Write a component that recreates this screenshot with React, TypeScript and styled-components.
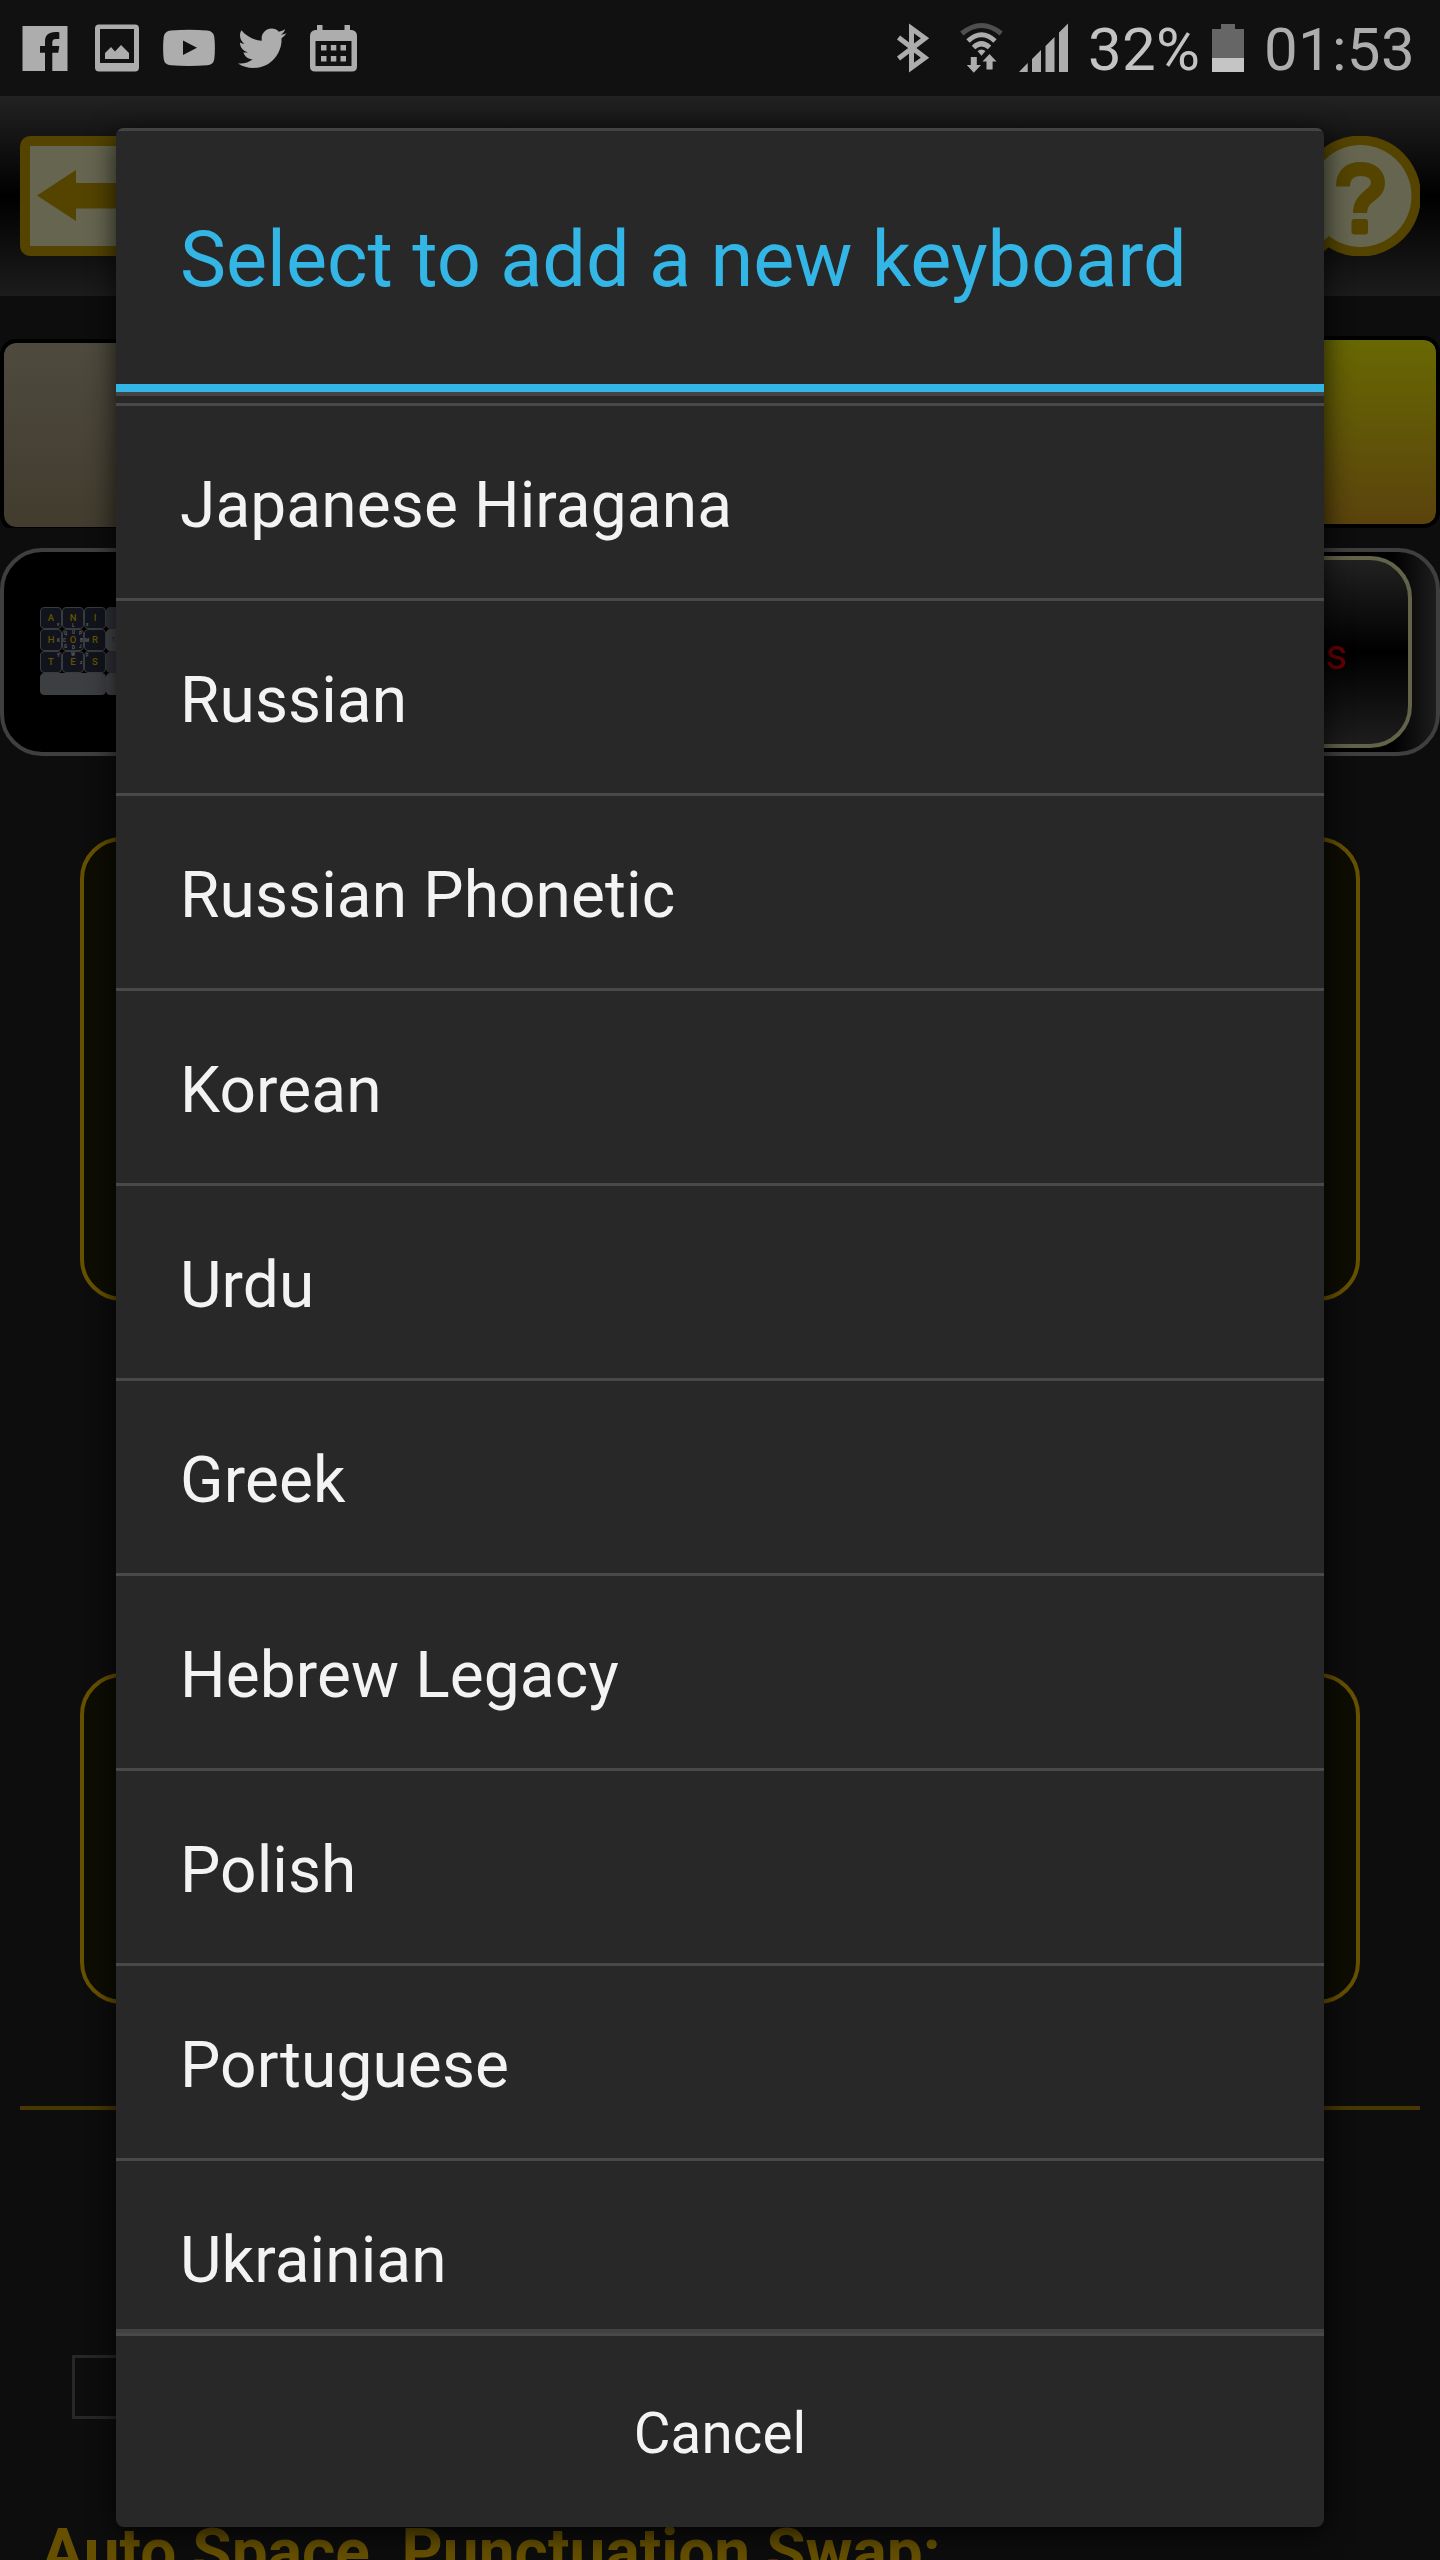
import React from 'react';
import styled, { createGlobalStyle } from 'styled-components';
import { FaTwitter } from 'react-icons/fa';

const GlobalStyle = createGlobalStyle`
  * { box-sizing: border-box; }
  html, body { margin: 0; padding: 0; background: #0d0d0d; }
`;

const Screen = styled.div`
  position: relative;
  width: 1440px;
  height: 2560px;
  overflow: hidden;
  display: flex;
  flex-direction: column;
  background: #0d0d0d;
  font-family: Roboto, 'Noto Sans', sans-serif;
`;

/* ---------- status bar ---------- */

const StatusBar = styled.header`
  flex: none;
  height: 96px;
  display: flex;
  justify-content: space-between;
  padding: 0 28px 0 22px;
  background: #111;
  color: #adadad;
`;

const StatusGroup = styled.div`
  display: flex;
  height: 96px;
`;

const StatusIcon = styled.svg<{ $gap?: number }>`
  display: block;
  flex: none;
  height: 96px;
  margin-left: ${(p) => p.$gap ?? 0}px;
  fill: #adadad;
`;

const BirdSlot = styled.div`
  margin: 23.5px 0 0 23px;
  width: 48.5px;
  font-size: 48.5px;
  line-height: 0;
`;

const StatusText = styled.span<{ $w: number; $gap: number; $tone: string }>`
  width: ${(p) => p.$w}px;
  margin-left: ${(p) => p.$gap}px;
  padding-top: 14px;
  font-size: 60px;
  line-height: 72px;
  letter-spacing: 0.3px;
  white-space: nowrap;
  color: ${(p) => p.$tone};
`;

/* ---------- dimmed page ---------- */

const TitleBar = styled.div`
  flex: none;
  height: 200px;
  padding: 40px 20px;
  display: flex;
  justify-content: space-between;
  background: linear-gradient(#222, #000 50%, #1c1c1c);
`;

const BarIcon = styled.svg`
  display: block;
  width: 120px;
  height: 120px;
`;

const ButtonRow = styled.div`
  flex: none;
  height: 192px;
  margin-top: 40px;
  display: flex;
  justify-content: space-between;
  overflow: hidden;
`;

const GradientButton = styled.div<{ $from: string; $to: string; $drop?: number }>`
  width: 720px;
  height: 192px;
  margin-top: ${(p) => p.$drop ?? 0}px;
  border: 4px solid #000;
  border-radius: 16px;
  background: linear-gradient(${(p) => p.$from}, ${(p) => p.$to}) padding-box;
`;

const KeyboardPanel = styled.section`
  flex: none;
  height: 208px;
  margin-top: 20px;
  padding: 4px 24px 4px 36px;
  display: flex;
  justify-content: space-between;
  border: 4px solid #3f3f3f;
  border-radius: 42px;
  background: linear-gradient(90deg, #000 0 1388px, #1d1d1d 1432px);
`;

const ChangeButton = styled.div`
  width: 480px;
  height: 192px;
  padding: 4px 61px 0 0;
  display: flex;
  align-items: center;
  justify-content: flex-end;
  border: 4px solid #63634a;
  border-radius: 42px;
  background: linear-gradient(#212121, #000 50%, #1d1d1d);
  color: #660000;
  font-size: 42px;
  font-weight: 400;
`;

const MiniKeyboard = styled.div`
  margin-top: 51px;
  width: 132px;
  height: 88px;
  display: grid;
  grid-template-columns: repeat(6, 22px);
  grid-template-rows: repeat(4, 22px);
  border-radius: 3px;
`;

const MiniKey = styled.div<{ $tone?: string; $span?: number }>`
  position: relative;
  grid-column: span ${(p) => p.$span ?? 1};
  border: 1px solid ${(p) => p.$tone ?? '#3a3b40'};
  border-radius: 4px;
  background: ${(p) => p.$tone ?? '#11141c'};
  color: ${(p) => (p.$tone ? '#222' : '#665200')};
  padding-left: ${(p) => (p.$tone ? 4 : 0)}px;
  font-size: ${(p) => (p.$tone ? 8 : 9.5)}px;
  font-weight: ${(p) => (p.$tone ? 400 : 500)};
  line-height: 20px;
  text-align: ${(p) => (p.$tone ? 'left' : 'center')};
`;

const Hint = styled.span<{ $x: number; $y: number }>`
  position: absolute;
  left: ${(p) => p.$x}px;
  top: ${(p) => p.$y}px;
  color: #606166;
  font-size: 4.5px;
  line-height: 5px;
  font-weight: 700;
`;

const Card = styled.section<{ $h: number; $gap: number }>`
  flex: none;
  height: ${(p) => p.$h}px;
  margin: ${(p) => p.$gap}px 80px 0;
  border: 4px solid #665000;
  border-radius: 42px;
  background: #0d0d04;
`;

const Separator = styled.div`
  flex: none;
  height: 4px;
  margin: 102px 20px 0;
  background: #463800;
`;

const Field = styled.div`
  flex: none;
  width: 600px;
  height: 64px;
  margin: 245px 0 0 72px;
  border: 3px solid #272727;
`;

const SectionLabel = styled.h2`
  flex: none;
  margin: 96px 0 0 41px;
  font-size: 64px;
  line-height: 75px;
  font-weight: 700;
  white-space: nowrap;
  color: #665000;
`;

/* ---------- dialog ---------- */

const Dialog = styled.div`
  position: absolute;
  left: 116px;
  top: 128px;
  width: 1208px;
  height: 2399px;
  display: flex;
  flex-direction: column;
  border-radius: 8px;
  overflow: hidden;
  background: #282828;
`;

const DialogShadow = styled.div`
  position: absolute;
  left: 116px;
  top: 128px;
  width: 1208px;
  height: 2399px;
  border-radius: 8px;
  box-shadow: 0 6px 28px rgba(0, 0, 0, 0.75);
`;

const DialogTitle = styled.h1`
  flex: none;
  height: 264px;
  margin: 0;
  padding: 4px 64px 0;
  border-top: 3px solid #434343;
  border-bottom: 8px solid #33b5e5;
  font-size: 77.5px;
  line-height: 250px;
  font-weight: 400;
  white-space: nowrap;
  color: #33b5e5;
`;

const List = styled.ul`
  flex: none;
  height: 1941px;
  margin: 0;
  padding: 7px 0 0;
  list-style: none;
  overflow: hidden;
  border-top: 4px solid #444;
  border-bottom: 4px solid #424242;
`;

const Item = styled.li`
  height: 195px;
  padding: 0 64px;
  border-top: 3px solid #494949;
  font-size: 64px;
  line-height: 200px;
  letter-spacing: 0.1px;
  color: #f3f3f3;
`;

const CancelButton = styled.div`
  flex: 1;
  border-top: 3px solid #494949;
  text-align: center;
  font-size: 56.5px;
  line-height: 197px;
  letter-spacing: 0.1px;
  color: #f3f3f3;
`;

const languages = [
  'Japanese Hiragana',
  'Russian',
  'Russian Phonetic',
  'Korean',
  'Urdu',
  'Greek',
  'Hebrew Legacy',
  'Polish',
  'Portuguese',
  'Ukrainian',
];

type HintSpec = [string, number, number];
const keyRows: { letter: string; hints: HintSpec[] }[][] = [
  [
    { letter: 'A', hints: [['v', 16, 14]] },
    { letter: 'N', hints: [['L', 9, 15]] },
    { letter: 'I', hints: [['x', 1, 14]] },
  ],
  [
    { letter: 'H', hints: [['K', 16, 8]] },
    { letter: 'O', hints: [['Q', 1, 1], ['U', 9, 0], ['P', 16, 1], ['C', 0, 8], ['B', 17, 8], ['G', 1, 14], ['D', 9, 15], ['J', 16, 14]] },
    { letter: 'R', hints: [['M', 0, 8]] },
  ],
  [
    { letter: 'T', hints: [['Y', 16, 1]] },
    { letter: 'E', hints: [['W', 8, 0], ['z', 17, 8]] },
    { letter: 'S', hints: [['F', 1, 1]] },
  ],
];
const sideKeys = [
  { tone: '#303136', label: '' },
  { tone: '#434448', label: '12' },
  { tone: '#303136', label: '' },
];

export default function App() {
  return (
    <>
      <GlobalStyle />
      <Screen>
        <StatusBar>
          <StatusGroup>
            <StatusIcon width="46" viewBox="22 0 46 96">
              <path d="M22.5 26H67.5V71H52.3V52.7H58.3L59.3 46H52.3V42.5C52.3 40 53.5 39 56 39H59.3V32.3C49.5 31 45 34.500 45 41.500V46H40V52.700H45V71H22.500Z" />
            </StatusIcon>
            <StatusIcon $gap={27} width="44" viewBox="95 0 44 96">
              <path
                fillRule="evenodd"
                d="M99 24.500H135Q139 24.500 139 28.500V67.500Q139 71.500 135 71.500H99Q95 71.500 95 67.500V28.500Q95 24.500 99 24.500ZM100 29V63H134V29Z"
              />
              <path d="M105 53L111 47L115 51.500L121 45L129 53V59H105Z" />
            </StatusIcon>
            <StatusIcon $gap={24} width="52" viewBox="163 0 52 96">
              <path
                fillRule="evenodd"
                d="M171 30.500Q189 29 207 30.500Q213.500 31 214.300 37Q215.500 48 214.300 59Q213.500 65 207 65.300Q189 66.500 171 65.300Q164.500 65 163.700 59Q162.500 48 163.700 37Q164.500 31 171 30.500ZM183 40.500V55L197 47.700Z"
              />
            </StatusIcon>
            <BirdSlot>
              <FaTwitter />
            </BirdSlot>
            <StatusIcon $gap={23} width="47" viewBox="309.500 0 47 96">
              <path
                fillRule="evenodd"
                d="M316.500 25H322V30H344V25H349.500V30H351.500Q356.500 31 356.500 36V66.500Q356.500 71.500 351.500 71.500H314.500Q309.500 71.500 309.500 66.500V36Q309.500 31 314.500 30H316.500ZM315 41V66H351V41Z"
              />
              <path d="M320.500 45h5.500v5.500h-5.500zM330.300 45h5.500v5.500h-5.500zM340 45h5.500v5.500h-5.500zM320.500 56h5.500v5.500h-5.500zM330.300 56h5.500v5.500h-5.500zM340 56h5.500v5.500h-5.500z" />
            </StatusIcon>
          </StatusGroup>

          <StatusGroup>
            <StatusIcon width="34" viewBox="896 0 34 96">
              <path
                d="M898.500 37.500L925 57.700L911.500 67.500V28.500L925 38.300L898.500 58.500"
                fill="none"
                stroke="#adadad"
                strokeWidth="5"
              />
            </StatusIcon>
            <StatusIcon $gap={29} width="45" viewBox="959 0 45 96">
              <g fill="none" stroke="#adadad" strokeWidth="5">
                <path d="M961.800 33.500Q981.500 17.500 1001.200 33.500" stroke="#4f4f4f" />
                <path d="M968 41Q981.500 28.500 995 41" />
                <path d="M973.500 47.500Q981.500 40 989.500 47.500" />
              </g>
              <path d="M977.500 51Q981.500 48 985.500 51L981.500 55.800Z" />
              <path d="M970.800 57H976.800V65H981L973.800 72.700L966.800 65H970.800Z" />
              <path d="M986.500 69.500H992.600V61.500H996.500L989.500 54L982.500 61.500H986.500Z" />
            </StatusIcon>
            <StatusIcon $gap={15} width="49" viewBox="1019 0 49 96">
              <path d="M1019 72L1027.700 63V72ZM1032 72V59L1041 50V72ZM1045.500 72V46L1054.500 37V72ZM1059 72V32.500L1068 23.500V72Z" />
            </StatusIcon>
            <StatusText $gap={20} $w={112} $tone="#c3c3c3">32%</StatusText>
            <StatusIcon $gap={12} width="32" viewBox="1212 0 32 96">
              <path fill="#666" d="M1212 29H1221V24H1235V29H1244V58H1212Z" />
              <path fill="#c5c5c5" d="M1212 58H1244V72H1212Z" />
            </StatusIcon>
            <StatusText $gap={20} $w={148} $tone="#adadad">01:53</StatusText>
          </StatusGroup>
        </StatusBar>

        <TitleBar>
          <BarIcon viewBox="0 0 120 120">
            <rect width="120" height="120" rx="10" fill="#544400" />
            <rect x="10" y="10" width="100" height="100" fill="#656550" />
            <path d="M17 59.500L56 34V47H104V72.500H56V85Z" fill="#544400" />
          </BarIcon>
          <BarIcon viewBox="0 0 120 120">
            <path d="M0 125Q18 122 29 111L60 60L0 60Z" fill="#544400" />
            <circle cx="60.500" cy="60" r="60.500" fill="#544400" />
            <path d="M5 112Q20 109 28 101L60 60L5 60Z" fill="#656550" />
            <circle cx="60.500" cy="60" r="51" fill="#656550" />
            <path
              d="M43 50.500C43 38 50.500 33 60.500 33C71 33 78 38.500 78 47C78 60 60 59 60 77"
              fill="none"
              stroke="#544400"
              strokeWidth="14"
            />
            <rect x="51.500" y="83" width="16.500" height="15.500" rx="3" fill="#544400" />
          </BarIcon>
        </TitleBar>

        <ButtonRow>
          <GradientButton $from="#4e4a3e" $to="#413c2e" $drop={3} />
          <GradientButton $from="#686803" $to="#5a430d" />
        </ButtonRow>

        <KeyboardPanel>
          <MiniKeyboard>
            {keyRows.map((row, r) => (
              <React.Fragment key={r}>
                {row.map((k) => (
                  <MiniKey key={k.letter}>
                    {k.letter}
                    {k.hints.map(([t, x, y]) => (
                      <Hint key={t} $x={x} $y={y}>{t}</Hint>
                    ))}
                  </MiniKey>
                ))}
                <MiniKey $tone={sideKeys[r].tone} $span={3}>{sideKeys[r].label}</MiniKey>
              </React.Fragment>
            ))}
            <MiniKey $tone="#3d3e42" $span={3} />
            <MiniKey $tone="#424347" $span={3} />
          </MiniKeyboard>
          <ChangeButton>s</ChangeButton>
        </KeyboardPanel>

        <Card $gap={81} $h={464} />
        <Card $gap={372} $h={331} />
        <Separator />
        <Field />
        <SectionLabel>Auto Space, Punctuation Swap:</SectionLabel>

        <DialogShadow />
        <Dialog role="dialog">
          <DialogTitle>Select to add a new keyboard</DialogTitle>
          <List>
            {languages.map((name) => (
              <Item key={name}>{name}</Item>
            ))}
          </List>
          <CancelButton>Cancel</CancelButton>
        </Dialog>
      </Screen>
    </>
  );
}
